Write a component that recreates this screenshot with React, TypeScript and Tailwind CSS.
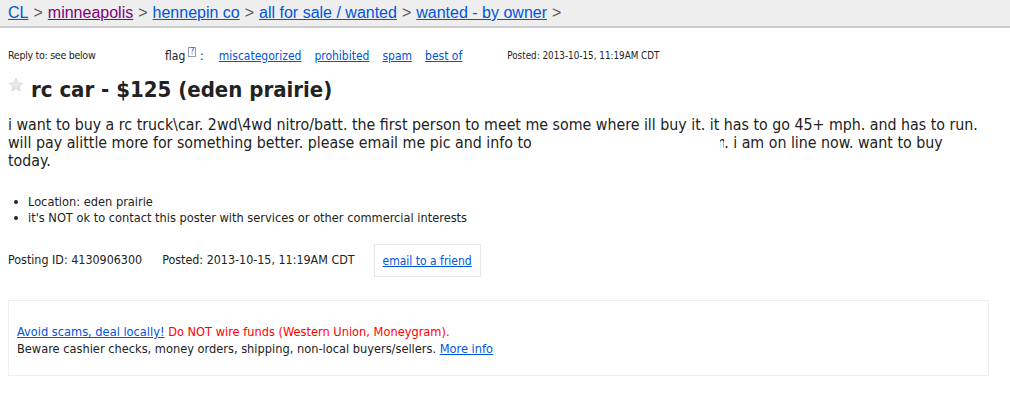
import React from 'react';

const crumbs = [
    { label: "CL", visited: false },
    { label: "minneapolis", visited: true },
    { label: "hennepin co", visited: false },
    { label: "all for sale / wanted", visited: false },
    { label: "wanted - by owner", visited: false },
];

const flags = ["miscategorized", "prohibited", "spam", "best of"];

export default function App() {
    const body = { fontFamily: '"DejaVu Sans Condensed", "DejaVu Sans", sans-serif' };
    return (
        <div className="min-h-[400px] bg-white text-[#222]" style={body}>
            {/* breadcrumbs */}
            <div
                className="h-[28px] bg-[#eeeeee] border-b-2 border-[#cccccc] px-2 flex items-center text-[16px] text-[#555]"
                style={{ fontFamily: '"Liberation Sans", Arial, sans-serif' }}
            >
                {crumbs.map((c, i) => (
                    <span key={i} className="mr-[5px]">
                        <a href="#" className={c.visited ? "underline text-[#800080]" : "underline text-[#0055dd]"}>{c.label}</a>
                        <span className="ml-[5px]">&gt;</span>
                    </span>
                ))}
            </div>

            {/* reply / flag / posted */}
            <div className="flex items-center h-[20px] mt-[18px] px-2 text-[12px]">
                <span className="w-[157px] text-[10.6px] tracking-[-0.3px]">Reply to: see below</span>
                <span>flag</span>
                <sup className="text-[8px] text-[#0055dd] ml-[3px] border border-[#99b] px-[1px] leading-[8px]">?</sup>
                <span className="ml-[4px] mr-[15px]">:</span>
                {flags.map((f) => (
                    <a key={f} href="#" className="underline text-[#0055dd] mr-[13px]">{f}</a>
                ))}
                <span className="ml-[32px] text-[9.8px]">Posted: 2013-10-15, 11:19AM CDT</span>
            </div>

            {/* title */}
            <div className="flex items-center px-2 mt-[8px] h-[30px]">
                <svg width="16" height="16" viewBox="0 0 24 24" className="mr-[7px] -mt-[8px]">
                    <defs>
                        <linearGradient id="st" x1="0" y1="0" x2="0" y2="1">
                            <stop offset="0" stopColor="#f4f4f4" />
                            <stop offset="1" stopColor="#dddddd" />
                        </linearGradient>
                    </defs>
                    <path d="M12 2l2.9 6.6 7.1.6-5.4 4.7 1.6 7-6.2-3.8-6.2 3.8 1.6-7L2 9.2l7.1-.6z" fill="url(#st)" stroke="#cccccc" strokeWidth="1" />
                </svg>
                <h2 className="text-[22px] font-bold text-[#222]">rc car - $125 (eden prairie)</h2>
            </div>

            {/* body */}
            <div className="px-2 mt-[12px] text-[15.8px] leading-[18px] text-[#222]">
                i want to buy a rc truck\car. 2wd\4wd nitro/batt. the first person to meet me some where ill buy it. it has to go 45+ mph. and has to run. will pay alittle more for something better. please email me pic and info to <span className="inline-block w-[184px]"></span>
                <span className="inline-block overflow-hidden w-[4px] align-bottom"><span className="inline-block -ml-[8px]">m</span></span>. i am on line now. want to buy<br />today.
            </div>

            {/* notices */}
            <ul className="mt-[24px] text-[12.7px] leading-[16px]">
                <li className="flex items-center">
                    <span className="w-[4px] h-[4px] rounded-full bg-[#222] ml-[14px] mr-[10px]"></span>
                    Location: eden prairie
                </li>
                <li className="flex items-center">
                    <span className="w-[4px] h-[4px] rounded-full bg-[#222] ml-[14px] mr-[10px]"></span>
                    it's NOT ok to contact this poster with services or other commercial interests
                </li>
            </ul>

            {/* ids */}
            <div className="flex items-center px-2 mt-[18px] text-[12.4px]">
                <span>Posting ID: 4130906300</span>
                <span className="ml-[20px]">Posted: 2013-10-15, 11:19AM CDT</span>
                <div className="ml-[19px] border border-[#e8e8e8] h-[33px] px-[8px] flex items-center text-[12px]">
                    <a href="#" className="underline text-[#0055dd]">email to a friend</a>
                </div>
            </div>

            {/* scams */}
            <div className="mx-2 mt-[23px] w-[981px] h-[76px] border border-[#eeeeee] px-[8px] pt-[22px] text-[12.7px] leading-[17px]">
                <div>
                    <a href="#" className="underline text-[#0055dd]">Avoid scams, deal locally!</a>{" "}
                    <span className="text-[#ff0000]">Do NOT wire funds (Western Union, Moneygram).</span>
                </div>
                <div>
                    Beware cashier checks, money orders, shipping, non-local buyers/sellers.{" "}
                    <a href="#" className="underline text-[#0055dd]">More info</a>
                </div>
            </div>
        </div>
    );
}
